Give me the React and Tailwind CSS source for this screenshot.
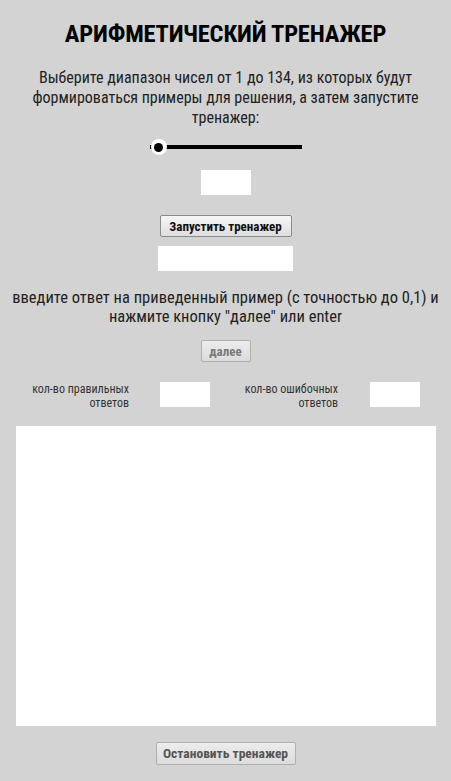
import React from "react";

const font = { fontFamily: '"Roboto Condensed", "Liberation Sans Narrow", Roboto, sans-serif' };

export default function App() {
  return (
    <div className="min-h-[781px] w-full bg-[#d3d3d3] text-[#111] flex flex-col items-center" style={font}>
      <h1 className="mt-[20px] h-[28px] leading-[28px] text-[24.5px] font-bold tracking-[-0.2px] text-black text-center">
        АРИФМЕТИЧЕСКИЙ ТРЕНАЖЕР
      </h1>
      <p className="mt-[20px] w-[400px] text-center text-[16px] leading-[20px] text-[#222]">
        Выберите диапазон чисел от 1 до 134, из которых будут формироваться примеры для решения, а затем запустите тренажер:
      </p>
      <div className="mt-[11px] relative w-[152px] h-[16px] flex items-center">
        <div className="ml-[4px] h-[4px] flex-1 bg-black" />
        <div className="absolute left-[0px] top-[6px] w-[2px] h-[4px] bg-black" />
        <div className="absolute left-[1px] top-[0px] w-[16px] h-[16px] rounded-full bg-white flex items-center justify-center">
          <div className="w-[9px] h-[9px] rounded-full bg-black" />
        </div>
      </div>
      <div className="mt-[15px] w-[50px] h-[25px] bg-white" />
      <button className="mt-[20px] h-[22px] w-[132px] border border-[#8a8a8a] rounded-[2px] bg-gradient-to-b from-[#f6f6f6] to-[#dedede] text-[13px] font-bold text-[#111] leading-none">
        Запустить тренажер
      </button>
      <div className="mt-[9px] w-[135px] h-[25px] bg-white" />
      <p className="mt-[17px] w-[430px] text-center text-[16.5px] leading-[19px] text-[#222]">
        введите ответ на приведенный пример (с точностью до 0,1) и нажмите кнопку "далее" или enter
      </p>
      <button className="mt-[14px] h-[22px] w-[50px] border border-[#b0b0b0] rounded-[2px] bg-gradient-to-b from-[#ececec] to-[#dcdcdc] text-[13px] font-bold text-[#7a7a7a] leading-none">
        далее
      </button>
      <div className="mt-[20px] w-full flex">
        <div className="ml-[21px] w-[108px] text-right text-[12px] leading-[14px] text-[#333] whitespace-nowrap">кол-во правильных<br />ответов</div>
        <div className="ml-[31px] w-[50px] h-[25px] bg-white" />
        <div className="ml-[20px] w-[108px] text-right text-[12px] leading-[14px] text-[#333] whitespace-nowrap">кол-во ошибочных<br />ответов</div>
        <div className="ml-[32px] w-[50px] h-[25px] bg-white" />
      </div>
      <div className="mt-[16px] w-[420px] h-[300px] bg-white" />
      <button className="mt-[16px] h-[23px] w-[140px] border border-[#b0b0b0] rounded-[2px] bg-gradient-to-b from-[#ececec] to-[#dcdcdc] text-[13.5px] font-bold text-[#555] leading-none">
        Остановить тренажер
      </button>
    </div>
  );
}
